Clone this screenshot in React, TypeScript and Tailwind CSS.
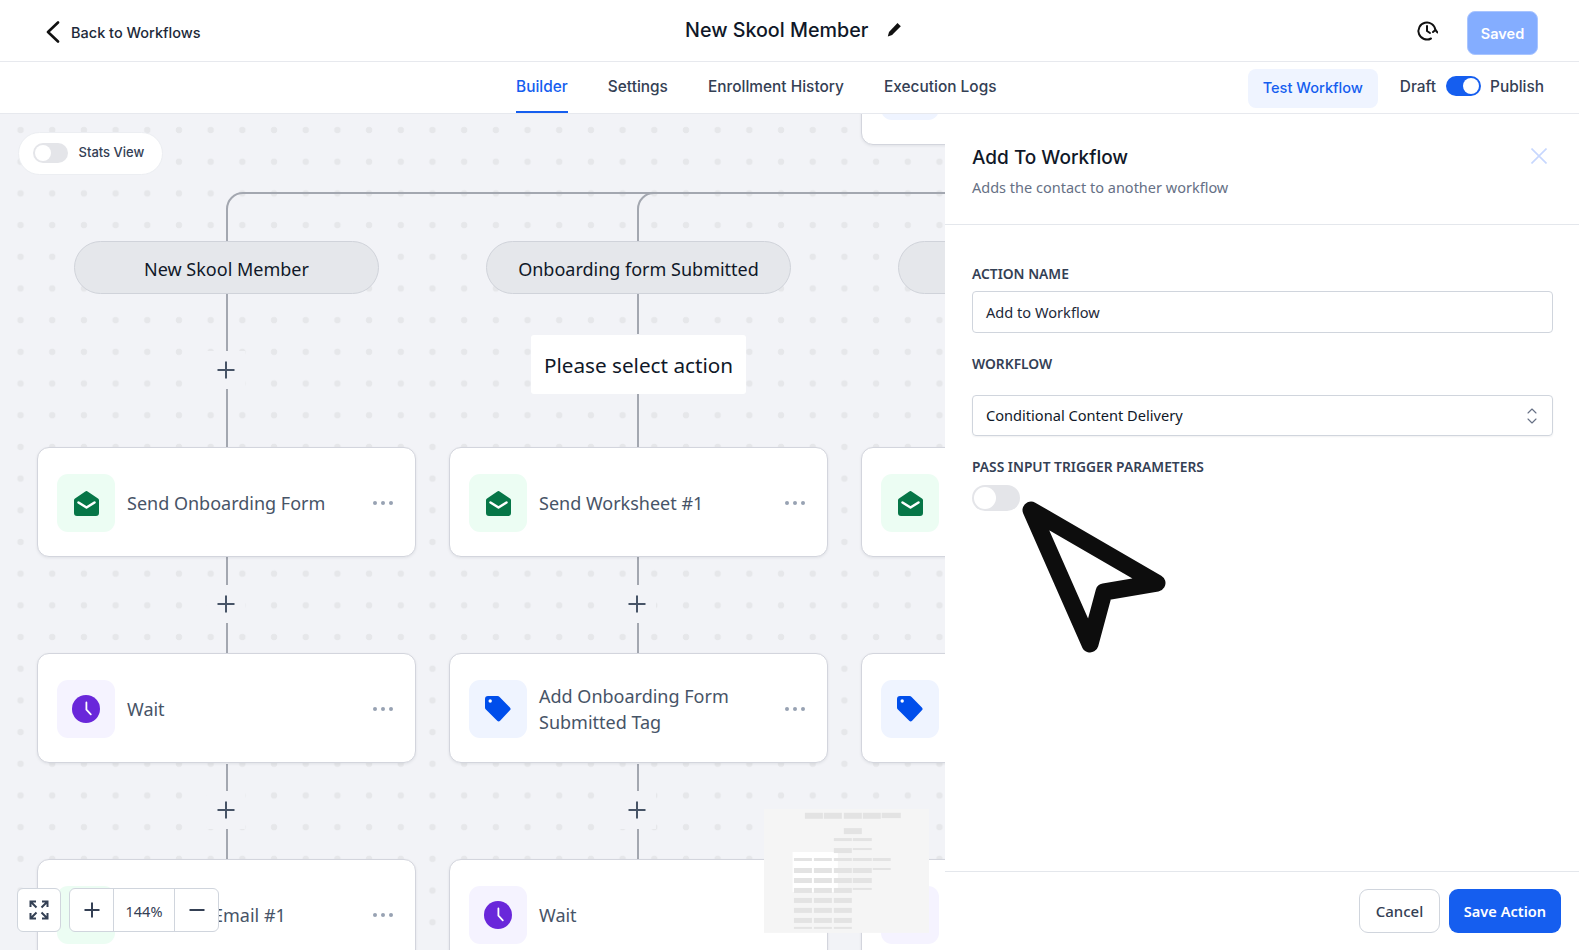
import type { ReactNode } from 'react'

type Kind = 'mail' | 'wait' | 'tag'

const MailIcon = () => (
    <svg width="25" height="25" viewBox="0 0 25 25">
        <path d="M11.3.4a2 2 0 0 1 2.3 0l10.4 7.1a2 2 0 0 1 1 1.7V22a3 3 0 0 1-3 3H3a3 3 0 0 1-3-3V9.2a2 2 0 0 1 1-1.7z" fill="#067647" />
        <path d="M4.5 11.5l8 5 8-5" fill="none" stroke="#fff" strokeWidth="2.6" strokeLinecap="round" strokeLinejoin="round" />
    </svg>
)

const WaitIcon = () => (
    <svg width="28" height="28" viewBox="0 0 28 28">
        <circle cx="14" cy="14" r="14" fill="#6927da" />
        <path d="M14.4 7.5v7.2l4.4 4.6" fill="none" stroke="#fff" strokeWidth="1.8" strokeLinecap="round" strokeLinejoin="round" />
    </svg>
)

const TagIcon = () => (
    <svg width="26" height="26" viewBox="0 0 26 26">
        <path d="M3 0h9.5a3 3 0 0 1 2.1.9l10.3 10.6a2 2 0 0 1 0 2.8l-9.8 10.4a2 2 0 0 1-2.9 0L.9 13.6A3 3 0 0 1 0 11.5V3a3 3 0 0 1 3-3z" fill="#004eeb" />
        <circle cx="5.2" cy="5" r="1.7" fill="#fff" />
    </svg>
)

const iconBox: Record<Kind, string> = {
    mail: 'bg-[#ecfdf3]',
    wait: 'bg-[#f5f3ff]',
    tag: 'bg-[#eff4ff]',
}

const icons: Record<Kind, ReactNode> = {
    mail: <MailIcon />,
    wait: <WaitIcon />,
    tag: <TagIcon />,
}

const Toggle = ({ on, large }: { on?: boolean; large?: boolean }) => (
    <div
        className={`flex items-center rounded-full px-[2px] ${large ? 'w-[48px] h-[26px]' : 'w-[35px] h-[20px]'} ${on ? 'bg-[#155eef] justify-end' : 'bg-[#e4e5e9] justify-start'}`}
    >
        <div className={`rounded-full bg-white ${large ? 'w-[22px] h-[22px]' : 'w-[16px] h-[16px]'}`}></div>
    </div>
)

const Node = ({ kind, label, pos, noMenu }: { kind: Kind; label: ReactNode; pos: string; noMenu?: boolean }) => (
    <div className={`absolute w-[379px] h-[110px] flex items-center pl-[19px] pr-[22px] pt-[2px] bg-white rounded-[12px] border-[1.5px] border-[#d3d5dd] shadow-[0_1px_3px_rgba(16,24,40,0.08)] ${pos}`}>
        <div className={`w-[58px] h-[58px] shrink-0 rounded-[11px] flex items-center justify-center ${iconBox[kind]}`}>
            {icons[kind]}
        </div>
        <div className="ml-[12px] flex-1 text-[18px] leading-[26px] text-[#475467]">{label}</div>
        {!noMenu && (
            <div className="flex gap-[3.5px]">
                <span className="w-[4.5px] h-[4.5px] rounded-full bg-[#98a2b3]"></span>
                <span className="w-[4.5px] h-[4.5px] rounded-full bg-[#98a2b3]"></span>
                <span className="w-[4.5px] h-[4.5px] rounded-full bg-[#98a2b3]"></span>
            </div>
        )}
    </div>
)

const Trigger = ({ label, pos }: { label?: string; pos: string }) => (
    <div className={`absolute w-[305px] h-[53px] pt-[3px] rounded-[27px] bg-[#e5e7eb] border-[1.5px] border-[#d0d3da] flex items-center justify-center text-[18px] text-[#101828] ${pos}`}>
        {label}
    </div>
)

const Plus = ({ pos }: { pos: string }) => (
    <div className={`absolute w-[38px] h-[38px] flex items-center justify-center bg-[#f2f3f7] ${pos}`}>
        <svg width="18" height="18" viewBox="0 0 18 18" fill="none" stroke="#475467" strokeWidth="2">
            <path d="M9 0.5v17M0.5 9h17" />
        </svg>
    </div>
)

// connectors between the trigger pills and the action cards
const Connectors = () => (
    <svg className="absolute left-0 top-0" width="945" height="836" fill="none" stroke="#a3a7b0" strokeWidth="2">
        <path d="M227 127v-32a16 16 0 0 1 16-16h702" />
        <path d="M638 127v-32a16 16 0 0 1 16-16" />
        <path d="M227 180v153M227 443v97M227 650v95" />
        <path d="M638 180v40M638 280v53M638 443v97M638 650v95" />
    </svg>
)

const miniRects: number[][] = [
    [165, 68, 54, 18], [222, 68, 54, 18], [282, 68, 54, 18], [339, 68, 54, 18], [396, 68, 57, 16],
    [282, 114, 54, 18],
    [252, 144, 54, 9], [309, 144, 57, 9],
    [252, 174, 54, 15], [309, 174, 57, 6],
    [132, 204, 54, 9], [192, 204, 54, 9], [252, 204, 54, 9], [309, 204, 57, 9], [369, 204, 54, 9],
    [132, 234, 54, 15], [192, 234, 54, 15], [252, 234, 54, 15], [309, 234, 57, 15], [369, 234, 54, 6],
    [132, 264, 54, 15], [192, 264, 54, 15], [252, 264, 54, 15], [309, 264, 57, 15],
    [132, 294, 54, 15], [192, 294, 54, 15], [252, 294, 54, 15], [309, 294, 57, 6],
    [132, 324, 54, 15], [192, 324, 54, 15], [252, 324, 54, 15],
    [132, 354, 54, 15], [192, 354, 54, 15], [252, 354, 54, 15],
    [132, 384, 54, 15], [192, 384, 54, 15], [252, 384, 54, 15],
    [132, 411, 54, 6], [192, 411, 54, 6], [252, 411, 54, 6],
]

const Minimap = () => (
    <svg className="absolute left-[764px] top-[695px]" width="165" height="124" viewBox="42 57 496 372">
        <rect x="42" y="57" width="496" height="372" fill="#f5f5f5" />
        <rect x="128" y="186" width="136" height="120" fill="#ffffff" />
        {miniRects.map(([x, y, w, h], i) => (
            <rect key={i} x={x} y={y} width={w} height={h} fill="#e3e3e3" />
        ))}
    </svg>
)

const FieldLabel = ({ children, className }: { children: ReactNode; className?: string }) => (
    <div className={`text-[13.8px] leading-[20px] font-semibold uppercase text-[#344054] ${className || ''}`}>{children}</div>
)

const App = () => {
    return (
        <div className="h-screen w-full overflow-hidden flex flex-col bg-white text-[#101828] [font-family:'Noto_Sans',sans-serif]">
            {/* top bar */}
            <div className="h-[62px] shrink-0 flex items-center border-b border-[#e7e9ee] pl-[46px] pr-[41px] [font-family:Inter,sans-serif]">
                <div className="w-[639px] flex items-center gap-[11px]">
                    <svg className="mt-[2px]" width="14" height="22" viewBox="0 0 14 22" fill="none" stroke="#111" strokeWidth="2.6" strokeLinecap="round" strokeLinejoin="round">
                        <path d="M12 1.5L2 11l10 9.5" />
                    </svg>
                    <span className="mt-[4px] text-[14.5px] font-medium text-[#1d2939]">Back to Workflows</span>
                </div>
                <div className="flex items-center gap-[19px]">
                    <span className="text-[19.7px] font-medium text-[#101828]">New Skool Member</span>
                    <svg className="-mt-[1px]" width="15" height="15" viewBox="0 0 15 15">
                        <path d="M10.5 1l3.3 3.2-8.7 8.9L.8 14.4l1.2-4.4z" fill="#111" />
                    </svg>
                </div>
                <div className="ml-auto flex items-center gap-[29px]">
                    <svg width="22" height="22" viewBox="0 0 22 22" fill="none" stroke="#111" strokeWidth="2" strokeLinecap="round" strokeLinejoin="round">
                        <path d="M19.4 10A8.5 8.5 0 1 0 15 18.5" />
                        <path d="M11 6v5l3 2" />
                        <path d="M17 12l2.4-2 2 2.4" />
                    </svg>
                    <button className="w-[71px] h-[44px] mt-[4px] pt-[2px] rounded-[8px] bg-[#84adff] border border-[#a9c5ff] text-white text-[14.5px] font-semibold">
                        Saved
                    </button>
                </div>
            </div>

            {/* tab bar */}
            <div className="h-[52px] shrink-0 flex items-stretch border-b border-[#e7e9ee] pl-[516px] pr-[35px] [font-family:Inter,sans-serif]">
                <div className="flex gap-[40px] text-[15.4px] tracking-[0.02px] font-medium text-[#344054]">
                    <div className="flex items-center text-[#155eef] border-b-[2px] border-[#155eef] pb-[1px] pt-[1px]">Builder</div>
                    <div className="flex items-center pb-[1px]">Settings</div>
                    <div className="flex items-center pb-[1px]">Enrollment History</div>
                    <div className="flex items-center pb-[1px]">Execution Logs</div>
                </div>
                <div className="ml-auto flex items-center">
                    <button className="w-[130px] h-[39px] mt-[2px] pt-[1px] rounded-[8px] bg-[#eff4ff] text-[#155eef] text-[14.6px] font-medium">
                        Test Workflow
                    </button>
                    <span className="ml-[22px] text-[15.4px] font-medium text-[#344054] pb-[1px]">Draft</span>
                    <div className="ml-[10px] mb-[3px]">
                        <Toggle on />
                    </div>
                    <span className="ml-[9px] text-[15.4px] font-medium text-[#344054] pb-[1px]">Publish</span>
                </div>
            </div>

            <div className="flex-1 min-h-0 flex">
                {/* builder canvas */}
                <div className="relative flex-1 overflow-hidden bg-[#f2f3f7] bg-[radial-gradient(circle,#e6e7ea_3px,transparent_3.6px)] bg-[size:31.7px_31.7px] bg-[position:4.7px_0.2px]">
                    <Connectors />

                    <div className="absolute left-[861px] -top-[79px] w-[379px] h-[110px] bg-white rounded-[12px] border-[1.5px] border-[#d3d5dd] shadow-[0_1px_3px_rgba(16,24,40,0.08)] pl-[19px] pt-[26px]">
                        <div className="w-[58px] h-[58px] rounded-[11px] bg-[#eff4ff]"></div>
                    </div>

                    <Trigger label="New Skool Member" pos="left-[74px] top-[127px]" />
                    <Trigger label="Onboarding form Submitted" pos="left-[486px] top-[127px]" />
                    <Trigger pos="left-[898px] top-[127px]" />

                    <div className="absolute left-[531px] top-[221px] w-[215px] h-[59px] pt-[3px] bg-white rounded-[3px] flex items-center justify-center text-[20.7px] text-[#101828]">
                        Please select action
                    </div>

                    <Plus pos="left-[207px] top-[237px]" />
                    <Plus pos="left-[207px] top-[471px]" />
                    <Plus pos="left-[207px] top-[677px]" />
                    <Plus pos="left-[618px] top-[471px]" />
                    <Plus pos="left-[618px] top-[677px]" />

                    <Node kind="mail" label="Send Onboarding Form" pos="left-[37px] top-[333px]" />
                    <Node kind="mail" label="Send Worksheet #1" pos="left-[449px] top-[333px]" />
                    <Node kind="mail" label="" pos="left-[861px] top-[333px]" noMenu />
                    <Node kind="wait" label="Wait" pos="left-[37px] top-[539px]" />
                    <Node kind="tag" label={<>Add Onboarding Form<br />Submitted Tag</>} pos="left-[449px] top-[539px]" />
                    <Node kind="tag" label="" pos="left-[861px] top-[539px]" noMenu />
                    <Node kind="mail" label={<span className="pl-[86px]">Email #1</span>} pos="left-[37px] top-[745px]" />
                    <Node kind="wait" label="Wait" pos="left-[449px] top-[745px]" />
                    <Node kind="wait" label="" pos="left-[861px] top-[745px]" noMenu />

                    <div className="absolute left-[17.5px] top-[17.5px] w-[145px] h-[43px] rounded-[22px] bg-white border border-[#eceef2] flex items-center pl-[14px] gap-[11px] [font-family:Inter,sans-serif]">
                        <Toggle />
                        <span className="text-[13px] font-medium text-[#344054]">Stats View</span>
                    </div>

                    <Minimap />

                    <div className="absolute left-[17px] bottom-[18px] flex gap-[8px]">
                        <div className="w-[44px] h-[44px] rounded-[6px] bg-white border border-[#d0d5dd] flex items-center justify-center">
                            <svg width="20" height="20" viewBox="0 0 20 20" fill="none" stroke="#344054" strokeWidth="2">
                                <path d="M1.5 7V1.5H7M1.5 1.5L7.5 7.5M18.5 7V1.5H13M18.5 1.5l-6 6M1.5 13v5.5H7M1.5 18.5l6-6M18.5 13v5.5H13M18.5 18.5l-6-6" />
                            </svg>
                        </div>
                        <div className="h-[44px] flex rounded-[6px] bg-white border border-[#d0d5dd]">
                            <div className="w-[43px] flex items-center justify-center">
                                <svg width="16" height="16" viewBox="0 0 16 16" fill="none" stroke="#344054" strokeWidth="2">
                                    <path d="M8 0.5v15M0.5 8h15" />
                                </svg>
                            </div>
                            <div className="w-[62px] flex items-center justify-center border-x border-[#d0d5dd] text-[14.5px] text-[#344054] pt-[4px]">144%</div>
                            <div className="w-[43px] flex items-center justify-center">
                                <svg width="16" height="16" viewBox="0 0 16 16" fill="none" stroke="#344054" strokeWidth="2">
                                    <path d="M0.5 8h15" />
                                </svg>
                            </div>
                        </div>
                    </div>
                </div>

                {/* side panel */}
                <div className="relative w-[634px] shrink-0 flex flex-col bg-white">
                    <div className="h-[111px] shrink-0 border-b border-[#e4e7ec] pl-[27px] pr-[32px] pt-[29px] flex justify-between">
                        <div>
                            <div className="text-[19px] leading-[30px] font-medium text-[#101828] [font-family:Inter,sans-serif]">Add To Workflow</div>
                            <div className="mt-[4px] text-[14.5px] leading-[20px] text-[#667085]">Adds the contact to another workflow</div>
                        </div>
                        <svg className="mt-[5px]" width="16" height="16" viewBox="0 0 16 16" fill="none" stroke="#c7d7fe" strokeWidth="1.6">
                            <path d="M0.5 0.5l15 15M15.5 0.5l-15 15" />
                        </svg>
                    </div>

                    <div className="flex-1 px-[27px] pr-[26px] pt-[39px]">
                        <FieldLabel>Action Name</FieldLabel>
                        <div className="mt-[7px] h-[42px] flex items-center px-[13px] pt-[1px] rounded-[4px] border border-[#d0d5dd] text-[14.6px] text-[#1d2939]">
                            Add to Workflow
                        </div>
                        <FieldLabel className="mt-[21px]">Workflow</FieldLabel>
                        <div className="mt-[21px] h-[41px] flex items-center justify-between px-[13px] rounded-[4px] border border-[#d0d5dd] shadow-[0_1px_2px_rgba(16,24,40,0.06)] text-[14.6px] text-[#101828]">
                            Conditional Content Delivery
                            <svg className="mr-[2px]" width="10" height="16" viewBox="0 0 10 16" fill="none" stroke="#667085" strokeWidth="1.1" strokeLinecap="round" strokeLinejoin="round">
                                <path d="M1 5l4-4 4 4M1 11l4 4 4-4" />
                            </svg>
                        </div>
                        <FieldLabel className="mt-[21px]">Pass Input Trigger Parameters</FieldLabel>
                        <div className="mt-[8px]">
                            <Toggle large />
                        </div>
                    </div>

                    <div className="h-[79px] shrink-0 border-t border-[#e4e7ec] flex items-start justify-end gap-[9px] pt-[17px] pr-[18px]">
                        <button className="w-[81px] h-[44px] rounded-[9px] border border-[#d0d5dd] text-[15px] font-medium text-[#344054]">Cancel</button>
                        <button className="w-[112px] h-[44px] pt-[1px] rounded-[9px] bg-[#155eef] text-[14.6px] font-semibold text-white">Save Action</button>
                    </div>

                    {/* oversized pointer drawn over the panel */}
                    <svg className="absolute left-[70px] top-[381px]" width="160" height="170" viewBox="0 0 160 170" fill="none" stroke="#0d0d0d" strokeWidth="17" strokeLinejoin="round">
                        <path d="M16 15L142 88 89 97 75 149z" />
                    </svg>
                </div>
            </div>
        </div>
    )
}

export default App
